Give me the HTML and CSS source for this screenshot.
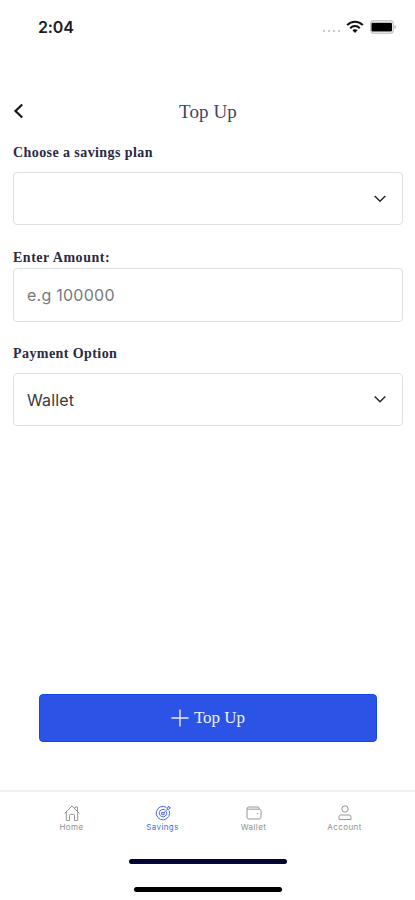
FILE: index.html
```html
<!DOCTYPE html>
<html lang="en">
<head>
<meta charset="utf-8">
<meta name="viewport" content="width=device-width, initial-scale=1">
<title>Top Up</title>
<link rel="stylesheet" href="styles.css">
</head>
<body>
<div class="screen">
  <div class="status">
    <span class="time">2:04</span>
    <div class="indicators">
      <span class="dots"><i></i><i></i><i></i><i></i></span>
      <svg class="wifi" width="18" height="14" viewBox="0 0 18 14" fill="none" stroke="#111" stroke-width="2">
        <path d="M1.2 5.1C5.6.5 12.4.5 16.8 5.1M4.2 8.2c2.7-2.8 6.9-2.8 9.6 0"/>
        <path d="M9 9.2c-1.1 0-1.9.4-2.6 1.1L9 13l2.6-2.7C10.900 9.600 10.100 9.200 9 9.200z" fill="#111" stroke="none"/>
      </svg>
      <svg class="battery" width="27" height="14" viewBox="0 0 27 14">
        <rect x=".7" y=".7" width="22.600" height="12.600" rx="3" fill="#fff" stroke="#c9c9c9" stroke-width="1.400"/>
        <rect x="1.500" y="2.800" width="20.500" height="8.600" rx="1.200" fill="#000"/>
        <path d="M24.500 5v4c1.800-.8 1.800-3.200 0-4z" fill="#aaa"/>
      </svg>
    </div>
  </div>

  <header class="header">
    <svg class="back" width="12" height="16" viewBox="0 0 12 16" fill="none" stroke="#161616" stroke-width="2.200"><path d="M9.200 1.500 2.500 8l6.700 6.500"/></svg>
    <h1>Top Up</h1>
  </header>

  <main class="form">
    <label class="label label-plan">Choose a savings plan</label>
    <div class="field field-plan">
      <span></span>
      <svg width="14" height="10" viewBox="0 0 14 10" fill="none" stroke="#2b2b2b" stroke-width="1.600"><path d="M1.700 2 7 7.200 12.300 2"/></svg>
    </div>
    <label class="label label-amount">Enter Amount:</label>
    <div class="field field-amount"><span class="placeholder">e.g 100000</span></div>
    <label class="label label-payment">Payment Option</label>
    <div class="field field-payment">
      <span class="value">Wallet</span>
      <svg width="14" height="10" viewBox="0 0 14 10" fill="none" stroke="#2b2b2b" stroke-width="1.600"><path d="M1.700 1.500 7 6.700 12.300 1.500"/></svg>
    </div>
  </main>

  <button class="submit">
    <svg width="18" height="18" viewBox="0 0 18 18" stroke="#e9edff" stroke-width="1.400"><path d="M9 .5v17M.5 9h17"/></svg>
    <span>Top Up</span>
  </button>

  <nav class="tabs">
    <a class="tab">
      <svg width="18" height="18" viewBox="0 0 18 18" fill="none" stroke="#969696" stroke-width="1"><path d="M1.500 9.500 9 2l7.500 7.500M3.300 8v8.500h3.200v-5.300c0-.5.300-.8.800-.8h3.400c.5 0 .8.300.8.800v5.300h3.200V8M12 4.500V3h2.500v4"/></svg>
      <span>Home</span>
    </a>
    <a class="tab active">
      <svg width="18" height="18" viewBox="0 0 18 18" fill="none" stroke="#5069ef" stroke-width="1"><path d="M12.300 3.300a6.700 6.700 0 1 0 2.800 3.200"/><path d="M10.800 5.900a3.700 3.700 0 1 0 1.600 1.800"/><path d="M7.700 8.500h2.400v2.200H7.700zM9.500 9.200l3.800-3.900V3.600L15 2.200v1.500h1.400L15 5.300h-1.700"/></svg>
      <span>Savings</span>
    </a>
    <a class="tab">
      <svg width="18" height="18" viewBox="0 0 18 18" fill="none" stroke="#969696" stroke-width="1"><path d="M14 5.200V4c0-.6-.4-1-1-1H3.800C2.800 3 2 3.600 2 4.500v8.700c0 1 .8 1.800 1.800 1.800h10.400c1 0 1.800-.8 1.800-1.800V7c0-1-.8-1.800-1.800-1.800H3.500C2.600 5.200 2 4.900 2 4.300"/><path d="M12 9.500h1.200" stroke-width="1.200"/></svg>
      <span>Wallet</span>
    </a>
    <a class="tab">
      <svg width="18" height="18" viewBox="0 0 18 18" fill="none" stroke="#969696" stroke-width="1"><circle cx="9" cy="5" r="3.200"/><path d="M4.800 11h8.400c1.200 0 1.800 1 1.800 2.300v2.200H3v-2.200C3 12 3.600 11 4.800 11z"/></svg>
      <span>Account</span>
    </a>
  </nav>
  <div class="bar bar-navy"></div>
  <div class="bar bar-black"></div>
</div>
</body>
</html>
```
FILE: styles.css
```css
* { box-sizing: border-box; }
body { margin: 0; background: #fff; }
.screen {
  width: 415px;
  height: 900px;
  display: flex;
  flex-direction: column;
  overflow: hidden;
  font-family: "Liberation Serif", serif;
}
.status {
  height: 54px;
  padding: 0 18px 0 38px;
  display: flex;
  justify-content: space-between;
  align-items: center;
}
.time { font: 600 16px/20px Inter, sans-serif; color: #1c1c1c; letter-spacing: -.1px; }
.indicators { display: flex; align-items: center; }
.dots { display: flex; gap: 3px; margin: 8px 6px 0 0; }
.dots i { width: 2px; height: 2px; border-radius: 1px; background: #b9b9b9; }
.wifi { margin-right: 6px; }
.header {
  height: 60px;
  margin-top: 32px;
  padding: 0 12px 0 13px;
  display: grid;
  grid-template-columns: 24px 1fr 24px;
  align-items: start;
}
.back { margin-top: 17px; }
.header h1 {
  margin: 14px 0 0;
  font-size: 19px;
  line-height: 24px;
  font-weight: 400;
  text-align: center;
  color: #44445f;
  letter-spacing: .1px;
}
.form { padding: 0 12px 0 13px; height: 548px; display: flex; flex-direction: column; }
.label {
  height: 18px;
  font-size: 14px;
  line-height: 18px;
  font-weight: 700;
  color: #2a2a45;
  letter-spacing: .42px;
}
.label-plan { margin-top: -2px; }
.label-amount { margin-top: 24px; letter-spacing: .52px; }
.label-payment { margin-top: 23px; }
.field {
  height: 53px;
  border: 1.500px solid #dedfe2;
  border-radius: 4px;
  padding: 0 15px 0 13px;
  display: flex;
  align-items: center;
  justify-content: space-between;
  font: 400 16px/20px Inter, sans-serif;
}
.field-plan { margin-top: 10px; }
.field-amount { height: 54px; margin-top: 1px; }
.field-payment { margin-top: 10px; }
.placeholder { color: #77797d; letter-spacing: .25px; }
.value { color: #3a3a3a; letter-spacing: .15px; }
.submit {
  width: 338px;
  height: 48px;
  margin: 0 0 0 39px;
  padding: 0;
  border: 1px solid #1646ea;
  border-radius: 4px;
  background: #2b53e6;
  color: #eef1ff;
  font: 400 17px/22px "Liberation Serif", serif;
  display: flex;
  align-items: center;
  justify-content: center;
  gap: 5px;
}
.tabs {
  height: 69px;
  margin-top: 48px;
  padding: 12px 25px 0 26px;
  border-top: 2px solid #f0f0f0;
  display: grid;
  grid-template-columns: repeat(4, 1fr);
}
.tab {
  display: flex;
  flex-direction: column;
  align-items: center;
  font: 400 8px/10px Inter, sans-serif;
  letter-spacing: .4px;
  color: #8f8f8f;
}
.active { color: #5069ef; }
.bar { flex: none; border-radius: 3px; }
.bar-navy { width: 158px; height: 5px; margin-left: 129px; background: #050533; }
.bar-black { width: 148px; height: 5px; margin: 23px 0 0 134px; background: #000; }
```
